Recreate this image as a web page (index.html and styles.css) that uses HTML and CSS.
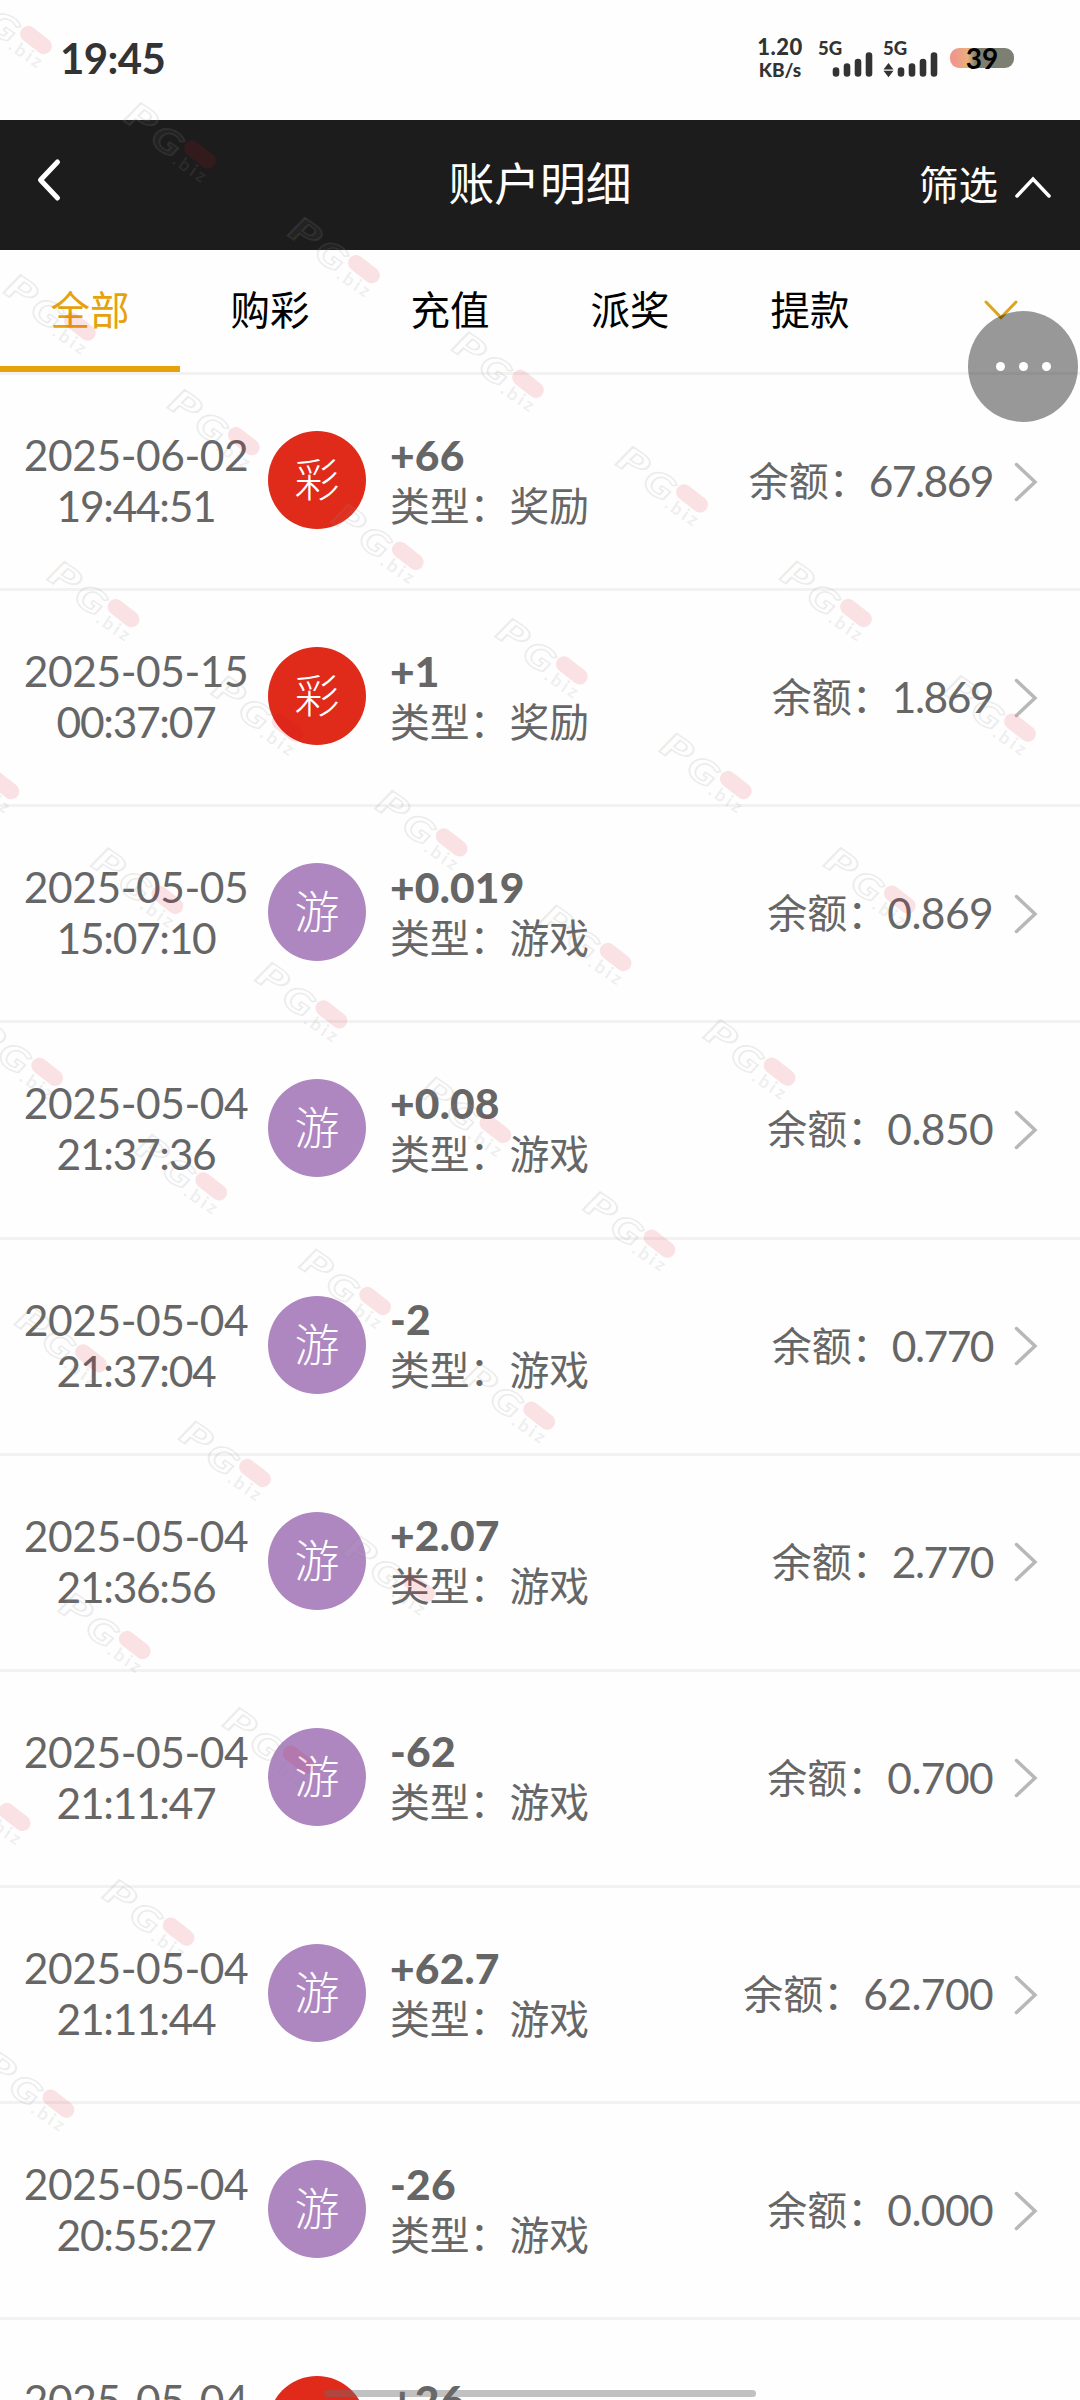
FILE: index.html
```html
<!DOCTYPE html>
<html lang="zh-CN">
<head>
<meta charset="utf-8">
<title>账户明细</title>
<link rel="stylesheet" href="styles.css">
</head>
<body>
<div class="screen">
  <div class="status">
    <span class="clock">19:45</span>
    <div class="status-right">
      <div class="speed"><span class="speed-num">1.20</span><span class="speed-unit">KB/s</span></div>
      <div class="signal">
        <span class="net">5G</span>
        <svg class="bars" width="56" height="28" viewBox="0 0 56 28"><path d="M18 20.500v3M29 16.500v7M40 12v11.500M51 5.500v18" stroke="#333" stroke-width="6.600" stroke-linecap="round"/></svg>
      </div>
      <div class="signal second">
        <span class="net">5G</span>
        <svg class="bars" width="56" height="28" viewBox="0 0 56 28"><path d="M18 20.500v3M29 16.500v7M40 12v11.500M51 5.500v18" stroke="#333" stroke-width="6.600" stroke-linecap="round"/><path d="M.5 19.500l5-6.500 5 6.500zM.5 20.800l5 6.500 5-6.500z" fill="#333"/></svg>
      </div>
      <div class="battery">39</div>
    </div>
  </div>

  <header class="header">
    <svg class="back" width="30" height="46" viewBox="0 0 30 46"><path d="M24.500 5L7.500 23l17 18" fill="none" stroke="#fff" stroke-width="5" stroke-linecap="round" stroke-linejoin="round"/></svg>
    <h1 class="title">账户明细</h1>
    <div class="filter"><span>筛选</span><svg width="38" height="24" viewBox="0 0 38 24"><path d="M3 21L19 4l16 17" fill="none" stroke="#fff" stroke-width="3.500" stroke-linecap="round"/></svg></div>
  </header>

  <nav class="tabs">
    <span class="tab active">全部</span><span class="tab">购彩</span><span class="tab">充值</span><span class="tab">派奖</span><span class="tab">提款</span>
    <span class="tab more"><svg width="36" height="22" viewBox="0 0 36 22"><path d="M3 3l15 15.500L33 3" fill="none" stroke="#dba520" stroke-width="3" stroke-linecap="round"/></svg></span>
  </nav>

  <main class="list" id="list"></main>

  <svg class="watermark" width="1080" height="2400" viewBox="0 0 1080 2400" aria-hidden="true">
    <defs>
      <g id="mark">
        <g transform="rotate(34)">
          <text class="wm-pg" x="-84" y="15" textLength="30" lengthAdjust="spacingAndGlyphs">P</text>
          <text class="wm-pg" x="-50" y="19" textLength="30" lengthAdjust="spacingAndGlyphs">G</text>
          <text class="wm-biz" x="-19" y="23" textLength="36">.biz</text>
        </g>
        <rect class="wm-pill" x="-18" y="-8" width="36" height="16" rx="8" transform="rotate(38)"/>
      </g>
    </defs>
    <g id="marks"></g>
  </svg>

  <button class="float" aria-label="更多"><i></i><i></i><i></i></button>
  <div class="home"></div>
</div>
<script src="script.js"></script>
</body>
</html>
```
FILE: styles.css
```css
* { box-sizing: border-box; }
body { margin: 0; }
.screen {
  position: relative;
  width: 1080px;
  height: 2400px;
  overflow: hidden;
  background: #fefefe;
  font-family: Lato, "Noto Sans CJK SC", sans-serif;
  font-size: 39.5px;
  color: #666;
}

.status {
  display: flex;
  justify-content: space-between;
  height: 120px;
  padding: 0 66px 0 60px;
  color: #333;
  font-weight: 700;
}
.clock { font-size: 42px; line-height: 116px; letter-spacing: -.6px; }
.status-right { display: flex; align-items: flex-start; padding-top: 35px; }
.speed { display: flex; flex-direction: column; align-items: center; width: 48px; margin-right: 14px; }
.speed-num { font-size: 22px; font-weight: 900; line-height: 24px; letter-spacing: .5px; }
.speed-unit { font-size: 19px; font-weight: 900; line-height: 21px; }
.signal { width: 54px; margin-right: 11px; padding-top: 3px; }
.second { margin-right: 13px; }
.net { display: block; height: 11px; font-size: 18.500px; font-weight: 900; line-height: 20px; }
.bars { display: block; width: 56px; margin-top: 1px; }
.battery {
  width: 64px;
  height: 20px;
  margin-top: 13px;
  border-radius: 9px;
  background: linear-gradient(90deg, #f0978c 0 8%, #eab07a 28%, #7d7f72 40%);
  color: #000;
  font-size: 28px;
  line-height: 20px;
  text-align: center;
}

.header {
  display: grid;
  grid-template-columns: 1fr auto 1fr;
  align-items: center;
  height: 130px;
  padding: 0 28px 0 33px;
  background: #1c1c1c;
  color: #fff;
}
.back { margin-top: -10px; }
.title { margin: -3px 0 0 -5px; font-size: 45.800px; font-weight: 400; line-height: 60px; }
.filter { display: flex; align-items: center; justify-content: flex-end; gap: 16px; }
.filter span { margin-top: -5px; }
.filter svg { margin-top: 4px; }

.tabs {
  display: grid;
  grid-template-columns: repeat(6, 180px);
  height: 125px;
  border-bottom: 3px solid #f2f2f2;
  color: #000;
}
.tab { padding-top: 3px; border-bottom: 6px solid transparent; text-align: center; line-height: 113px; }
.active { color: #e6a20c; border-color: #e6a20c; }
.more { display: flex; align-items: center; justify-content: center; padding-left: 22px; }

.row {
  display: grid;
  grid-template-columns: 268px 98px 1fr auto 24px;
  align-items: center;
  height: 216.150px;
  padding-right: 42px;
  border-bottom: 3px solid #f2f2f2;
}
.date {
  display: flex;
  flex-direction: column;
  align-items: center;
  margin-top: -3px;
  padding-left: 4px;
  font-size: 42.500px;
  line-height: 51px;
  letter-spacing: -.45px;
}
.time { letter-spacing: -1.300px; }
.badge {
  width: 98px;
  height: 98px;
  margin-top: -3px;
  border-radius: 50%;
  background: #ae87c1;
  color: #fff;
  font-size: 45px;
  font-weight: 300;
  line-height: 98px;
  text-align: center;
}
.red { background: #e02a1a; }
.detail { padding-left: 24px; font-size: 39.800px; }
.amount { font-size: 42.500px; font-weight: 900; line-height: 48px; letter-spacing: .2px; }
.kind { line-height: 54px; }
.balance { display: flex; align-items: center; line-height: 58px; padding-right: 21px; font-size: 40px; margin-top: -1px; }
.num { font-size: 42.500px; letter-spacing: -.6px; }
.tight { letter-spacing: -1.500px; }
.arrow { display: block; }

.watermark { position: absolute; left: 0; top: 0; pointer-events: none; }
.wm-pg { font: italic 900 34px Lato, sans-serif; fill: rgba(255,255,255,.04); stroke: rgba(140,140,140,.17); stroke-width: 1.500px; }
.wm-biz { font: 700 18px Lato, sans-serif; fill: rgba(140,140,140,.15); }
.wm-pill { fill: rgba(225,20,40,.12); }

.float {
  position: absolute;
  left: 968px;
  top: 311px;
  display: flex;
  align-items: center;
  justify-content: center;
  gap: 14px;
  width: 110px;
  height: 111px;
  padding: 0;
  border: 0;
  border-radius: 50%;
  background: rgba(0,0,0,.4);
}
.float i { width: 9px; height: 9px; border-radius: 50%; background: #fff; }
.home {
  position: absolute;
  left: 324px;
  top: 2390px;
  width: 432px;
  height: 7px;
  border-radius: 4px;
  background: rgba(110,110,110,.42);
}
```
FILE: script.js
```js
const rows = [
  ["2025-06-02", "19:44:51", "彩", "+66", "奖励", "67.869"],
  ["2025-05-15", "00:37:07", "彩", "+1", "奖励", "1.869"],
  ["2025-05-05", "15:07:10", "游", "+0.019", "游戏", "0.869"],
  ["2025-05-04", "21:37:36", "游", "+0.08", "游戏", "0.850"],
  ["2025-05-04", "21:37:04", "游", "-2", "游戏", "0.770"],
  ["2025-05-04", "21:36:56", "游", "+2.07", "游戏", "2.770"],
  ["2025-05-04", "21:11:47", "游", "-62", "游戏", "0.700"],
  ["2025-05-04", "21:11:44", "游", "+62.7", "游戏", "62.700"],
  ["2025-05-04", "20:55:27", "游", "-26", "游戏", "0.000"],
  ["2025-05-04", "", "游戏", "+26", "", ""]
];

// Balances with a leading 1 or 67, or a 77 pair, are set tighter.
const tight = (n) => /^(67|1)|77/.test(n) ? " tight" : "";

document.getElementById("list").innerHTML = rows.map(([date, time, mark, amount, kind, balance]) => `
  <div class="row">
    <div class="date"><span>${date}</span><span class="time">${time || "&nbsp;"}</span></div>
    <div class="badge ${mark === "游" ? "" : "red"}">${time ? mark : ""}</div>
    <div class="detail"><div class="amount">${amount}</div><div class="kind">${kind ? "类型：" + kind : "&nbsp;"}</div></div>
    <div class="balance">${balance ? `余额：<span class="num${tight(balance)}">${balance}</span>` : ""}</div>
    <svg class="arrow" width="24" height="42" viewBox="0 0 24 42"><path d="M2.500 3.500L21 21 2.500 38.500" fill="none" stroke="#b8b8b8" stroke-width="3.500" stroke-linecap="round"/></svg>
  </div>`).join("");

// Watermarks repeat along two slanted axes.
let marks = "";
for (let j = 0; j <= 8; j++) {
  for (let i = 0; i <= 6; i++) {
    const x = 36 + 164 * i - 120.2 * j;
    const y = 40 + 114.6 * i + 172 * j;
    if (x > -60) marks += `<use href="#mark" transform="translate(${x.toFixed(1)} ${y.toFixed(1)})"/>`;
  }
}
document.getElementById("marks").innerHTML = marks;
```
